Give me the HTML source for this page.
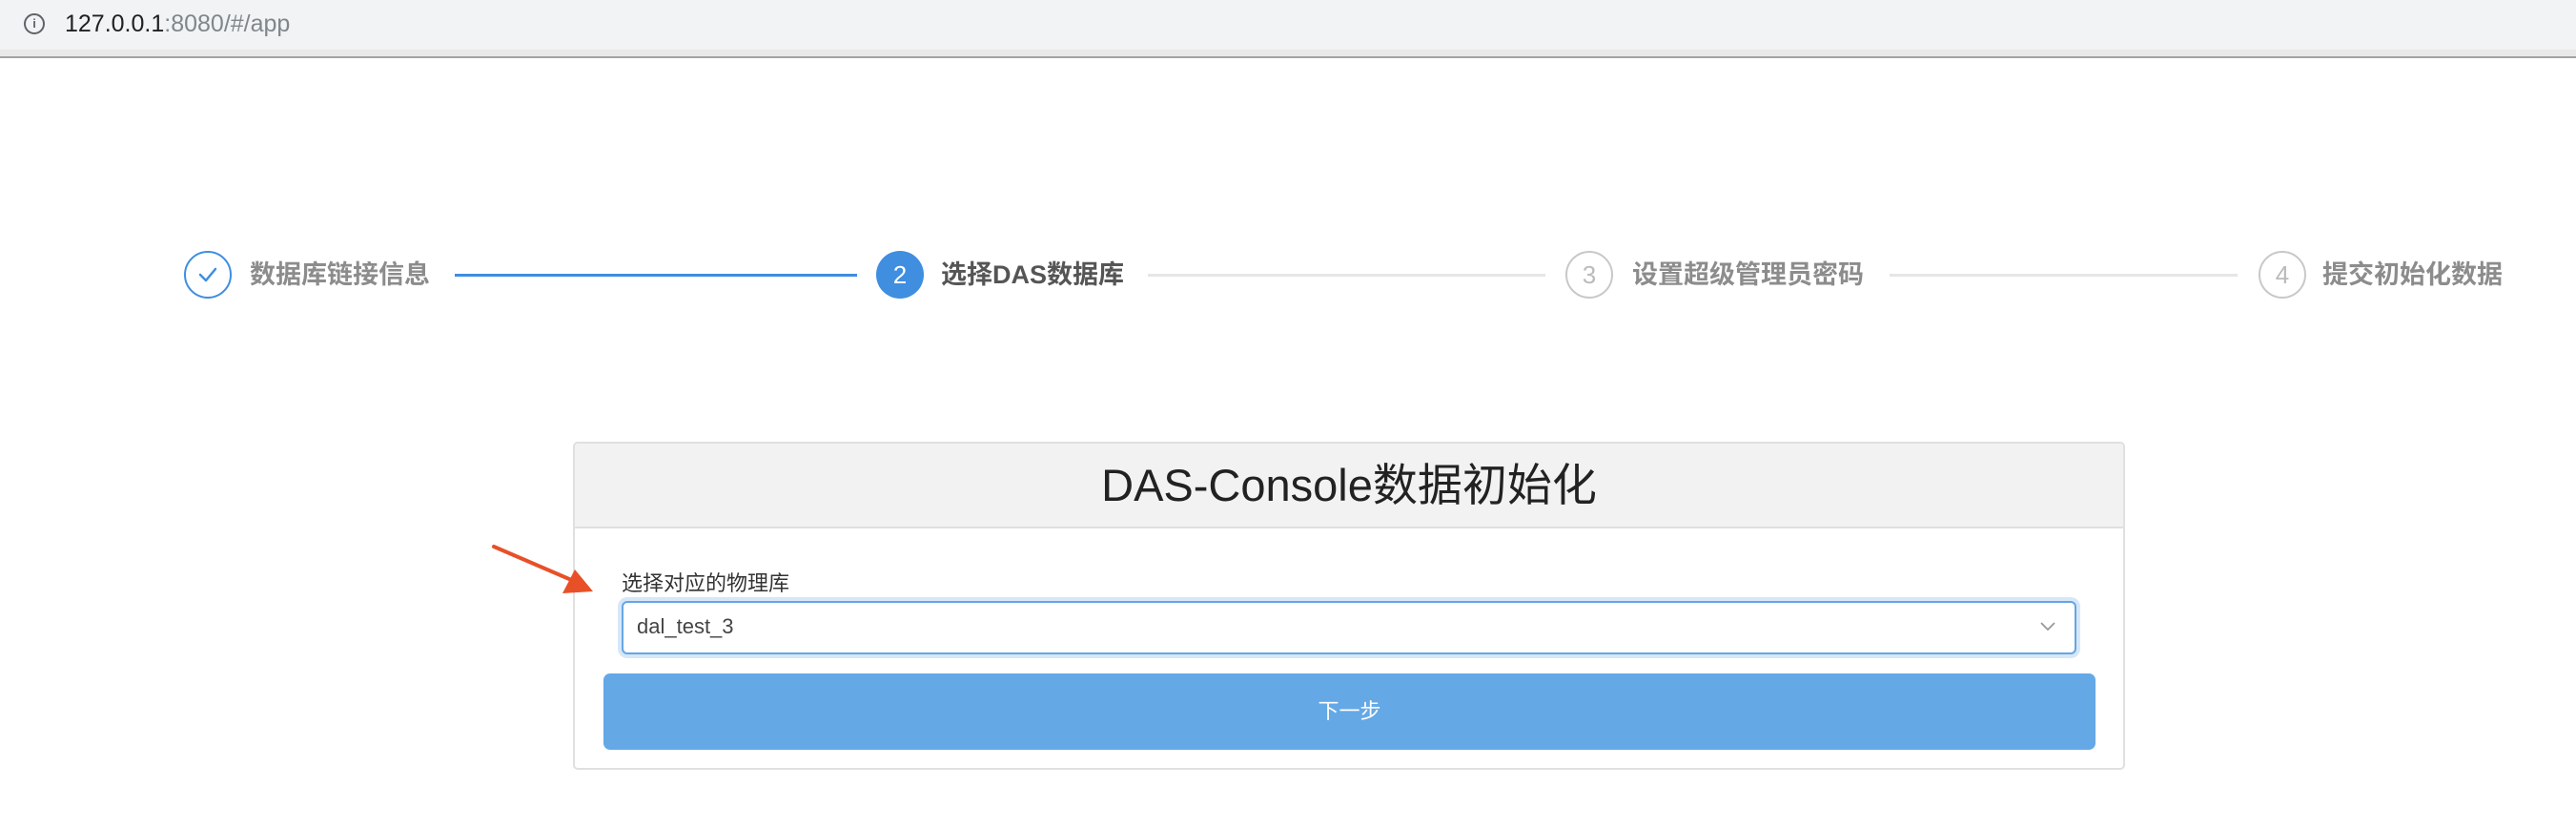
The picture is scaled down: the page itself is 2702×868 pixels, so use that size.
<!DOCTYPE html>
<html><head><meta charset="utf-8"><style>
*{margin:0;padding:0;box-sizing:border-box}
html,body{width:2702px;height:868px;background:#fff;overflow:hidden;font-family:"Liberation Sans","Noto Sans CJK SC",sans-serif}
.bar{position:absolute;left:0;top:0;width:2702px;height:61px;background:#e8e8e9;border-bottom:2px solid #a3a3a3}
.pill{position:absolute;left:-30px;top:0;width:2732px;height:52px;background:#f1f3f4;border-radius:0 0 0 26px}
.url{position:absolute;left:68px;top:8px;font-size:25px;line-height:34px;color:#202124}
.url span{color:#80868b}
.ic{position:absolute;left:25px;top:14px;width:22px;height:22px;border:2px solid #5f6368;border-radius:50%;font-size:13px;line-height:18px;text-align:center;color:#5f6368;font-weight:bold}
.c{position:absolute;width:50px;height:50px;border-radius:50%;top:263px;text-align:center;line-height:46px;font-size:26px}
.t{position:absolute;top:270px;font-size:27px;line-height:36px;font-weight:bold;color:#8c8c8c;white-space:nowrap}
.l{position:absolute;top:287px;height:3px}
.card{position:absolute;left:601px;top:463px;width:1628px;height:344px;border:2px solid #e0e0e0;border-radius:5px;overflow:hidden}
.hd{height:89px;background:#f2f2f2;border-bottom:2px solid #e0e0e0;text-align:center;font-size:47px;line-height:88px;color:#222}
</style></head><body>
<div class="bar"><div class="pill"></div><div class="ic">i</div><div class="url">127.0.0.1<span>:8080/#/app</span></div></div>

<div class="c" style="left:193px;border:2px solid #3f8ee0">
<svg width="46" height="46" viewBox="0 0 46 46" style="position:absolute;left:0;top:0"><path d="M15 23 L21 29 L31 17" fill="none" stroke="#3f8ee0" stroke-width="2.5" stroke-linecap="round" stroke-linejoin="round"/></svg></div>
<div class="t" style="left:262px">数据库链接信息</div>
<div class="l" style="left:477px;width:422px;background:#3f8ee0"></div>

<div class="c" style="left:919px;background:#3f8ee0;color:#fff;line-height:50px">2</div>
<div class="t" style="left:987px;color:#555">选择DAS数据库</div>
<div class="l" style="left:1204px;width:417px;background:#e6e6e6"></div>

<div class="c" style="left:1642px;border:2px solid #c8c8c8;color:#bbb">3</div>
<div class="t" style="left:1712px">设置超级管理员密码</div>
<div class="l" style="left:1982px;width:365px;background:#e6e6e6"></div>

<div class="c" style="left:2369px;border:2px solid #c8c8c8;color:#bbb">4</div>
<div class="t" style="left:2436px">提交初始化数据</div>

<div class="card"><div class="hd">DAS-Console数据初始化</div></div>
<div style="position:absolute;left:652px;top:597px;font-size:22px;line-height:30px;color:#333">选择对应的物理库</div>
<div style="position:absolute;left:652px;top:630px;width:1526px;height:56px;border:2px solid #66a5e3;border-radius:6px;box-shadow:0 0 0 4px #d6e7f8;background:#fff"></div>
<div style="position:absolute;left:668px;top:642px;font-size:22px;line-height:30px;color:#444">dal_test_3</div>
<svg style="position:absolute;left:2139px;top:651px" width="18" height="12"><path d="M2 2 L9 9 L16 2" fill="none" stroke="#999" stroke-width="1.8"/></svg>
<div style="position:absolute;left:633px;top:706px;width:1565px;height:80px;background:#64a8e6;border-radius:7px;color:#fff;font-size:22px;line-height:80px;text-align:center">下一步</div>

<svg style="position:absolute;left:510px;top:565px" width="120" height="65"><path d="M8 8 L94 45" stroke="#e85028" stroke-width="4" stroke-linecap="round"/><path d="M112 55 L80 57 L93 32 Z" fill="#e85028"/></svg>
</body></html>
